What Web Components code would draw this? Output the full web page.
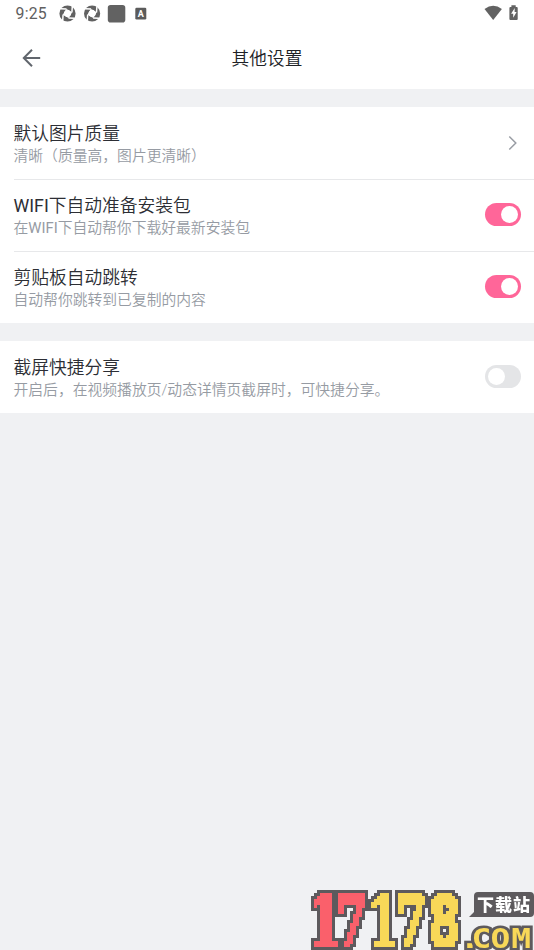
<!DOCTYPE html>
<html lang="zh-CN"><head><meta charset="utf-8"><title>其他设置</title>
<style>
html,body{margin:0;height:100%}
body{font-family:Roboto,"Noto Sans CJK SC",sans-serif;background:#f0f1f3;color:#2c2e34;overflow:hidden}
b{font-weight:400}
</style></head><body>
<settings-page></settings-page>
<script>
const define=(name,html)=>{
  const t=document.createElement('template');t.innerHTML=html;
  customElements.define(name,class extends HTMLElement{
    constructor(){super();this.attachShadow({mode:'open'}).append(t.content.cloneNode(true));}
  });
};
define('status-bar',`<style>
:host{display:flex;height:27px;box-sizing:border-box;align-items:center;padding:0 14px 0 15.5px;color:#606060}
.time{font-size:15.8px;line-height:27px;letter-spacing:.25px;width:43px}
svg{display:block;flex:none}.gap{flex:1}
</style>
<span class="time">9:25</span>
<svg width="90" height="27" viewBox="0 0 90 27"><defs><g id="s"><circle r="5.9" fill="none" stroke="#626262" stroke-width="4.4"/><path d="M-7-4.8-1-4.4M4.8-7 4.4-1M7 4.8 1 4.4M-4.8 7-4.4 1" stroke="#fff" stroke-width="1.5"/><path d="M-1.2-4.6 4.6-1.2 1.2 4.6-4.6 1.2z" fill="#fff"/></g></defs>
<use href="#s" x="8.5" y="13.5"/><use href="#s" x="33.1" y="13.5"/><rect x="48.8" y="5" width="17.5" height="17.5" rx="2.8" fill="#626262"/><rect x="76.3" y="7.7" width="11" height="11.8" rx="1.3" fill="#5b5b5b"/><text x="81.8" y="16.9" font-family="Roboto" font-weight="700" font-size="9" text-anchor="middle" fill="#fff">A</text></svg>
<span class="gap"></span>
<svg width="36" height="27" viewBox="0 0 36 27"><path d="M.5 9.1Q9.2 2.3 17.9 9.1L9.2 20z" fill="#626262"/><path d="M27.4 5.2h4.3v1.7h1q1 0 1 1v11q0 1-1 1h-6.3q-1 0-1-1v-11q0-1 1-1h1z" fill="#626262"/><path d="m30.7 8-3.6 5.7h2.1v4.1l3.4-5.8h-2z" fill="#fff"/></svg>`);
define('nav-bar',`<style>
:host{display:grid;grid-template-columns:60px 1fr 60px;align-items:center;height:62px}
svg{display:block;margin-left:21px}h1{font-weight:350;font-size:17.7px;line-height:26px;margin:1px 0 0;text-align:center;color:#202226}
</style><svg width="22" height="22" viewBox="0 0 22 22"><path d="M19.2 11H2.8M11 2.8 2.8 11l8.2 8.2" fill="none" stroke="#61666d" stroke-width="2"/></svg><h1><slot></slot></h1>`);
define('setting-group',`<style>
:host{display:block;background:#fff;margin-top:18px}
::slotted(setting-row:not(:first-child)){--line:#e7e8ea}
</style><slot></slot>`);
define('setting-row',`<style>
:host{display:flex;height:72px;box-sizing:border-box;margin-left:13.5px;padding-right:13px;align-items:center;justify-content:space-between;border-top:1px solid var(--line,transparent);font-weight:350}
.title{font-size:17.75px;line-height:24px;white-space:nowrap}
::slotted(b){font-weight:400}
.sub{font-size:14.8px;line-height:20px;color:#969ba3;white-space:nowrap;display:block}
.copy{padding-top:1px}
</style><div class="copy"><div class="title"><slot></slot></div><slot class="sub" name="note"></slot></div><slot name="control"></slot>`);
define('toggle-switch',`<style>
:host{display:flex;box-sizing:border-box;width:36px;height:22.5px;border-radius:12px;background:#e4e5e7;padding:3px;align-items:center;margin-top:-2px}
:host([on]){background:#ff6699;justify-content:flex-end}
i{width:16.8px;height:16.8px;border-radius:50%;background:#fff}
</style><i></i>`);
define('chevron-icon',`<style>:host{display:block;margin-right:3px;margin-top:-1px}svg{display:block}</style><svg width="10" height="16" viewBox="0 0 10 16"><path d="m1.3 1.5 6.5 6.5-6.5 6.5" fill="none" stroke="#999da4" stroke-width="1.5"/></svg>`);
define('site-mark',`<style>:host{position:fixed;right:0;bottom:0}svg{display:block;overflow:visible}
.d{font:700 69px "DejaVu Serif",serif}.d .round{font-family:"DejaVu Sans",sans-serif}</style>
<svg width="226" height="64" viewBox="0 0 226 64"><defs><filter id="px" x="0" y="1" width="225" height="63" filterUnits="userSpaceOnUse" color-interpolation-filters="sRGB">
<feMorphology in="SourceGraphic" operator="dilate" radius="1" result="fat"/>
<feFlood x="1" y="2" width="1" height="1" flood-color="#000"/><feOffset x="0" y="1" width="3" height="3"/><feTile x="0" y="1" width="225" height="63" result="grid"/>
<feComposite in="fat" in2="grid" operator="in"/><feMorphology operator="dilate" radius="1"/>
<feComponentTransfer result="fill"><feFuncA type="discrete" tableValues="0 1"/></feComponentTransfer>
<feMorphology in="fill" operator="dilate" radius="3" result="edge"/>
<feFlood flood-color="#5d5a5d"/><feComposite in2="edge" operator="in" result="rim"/><feMerge><feMergeNode in="rim"/><feMergeNode in="fill"/></feMerge></filter></defs>
<g filter="url(#px)"><text class="d" transform="scale(.66 1)" x="2 42 90 132 183" y="60" fill="#f8d858"><tspan fill="#fa606b">17</tspan>17<tspan class="round">8</tspan></text></g>
<path d="m161 31 5-5V10q0-4 4-4h52q4 0 4 4v17q0 4-4 4z" fill="#5d5a5d"/>
<text x="169" y="25" textLength="53" font-family="Noto Sans CJK SC" font-weight="900" font-size="17" fill="#fff">下载站</text>
<text transform="translate(0 61.5) scale(1.22 1)" x="124.5 134 149.5 166.5" y="0" font-family="DejaVu Sans Mono" font-weight="700" font-size="27" fill="#f8d858" stroke="#5d5a5d" stroke-width="5" paint-order="stroke">.COM</text></svg>`);
define('settings-page',`<style>:host{display:block;min-height:950px}.top{background:#fff}b{font-weight:400}</style>
<div class="top"><status-bar></status-bar><nav-bar>其他设置</nav-bar></div>
<setting-group><setting-row>默认图片质量<span slot="note">清晰（质量高，图片更清晰）</span><chevron-icon slot="control"></chevron-icon></setting-row>
<setting-row><b>WIFI</b>下自动准备安装包<span slot="note">在<b>WIFI</b>下自动帮你下载好最新安装包</span><toggle-switch slot="control" on></toggle-switch></setting-row>
<setting-row>剪贴板自动跳转<span slot="note">自动帮你跳转到已复制的内容</span><toggle-switch slot="control" on></toggle-switch></setting-row></setting-group>
<setting-group><setting-row>截屏快捷分享<span slot="note">开启后，在视频播放页/动态详情页截屏时，可快捷分享。</span><toggle-switch slot="control"></toggle-switch></setting-row></setting-group><site-mark></site-mark>`);
</script></body></html>
